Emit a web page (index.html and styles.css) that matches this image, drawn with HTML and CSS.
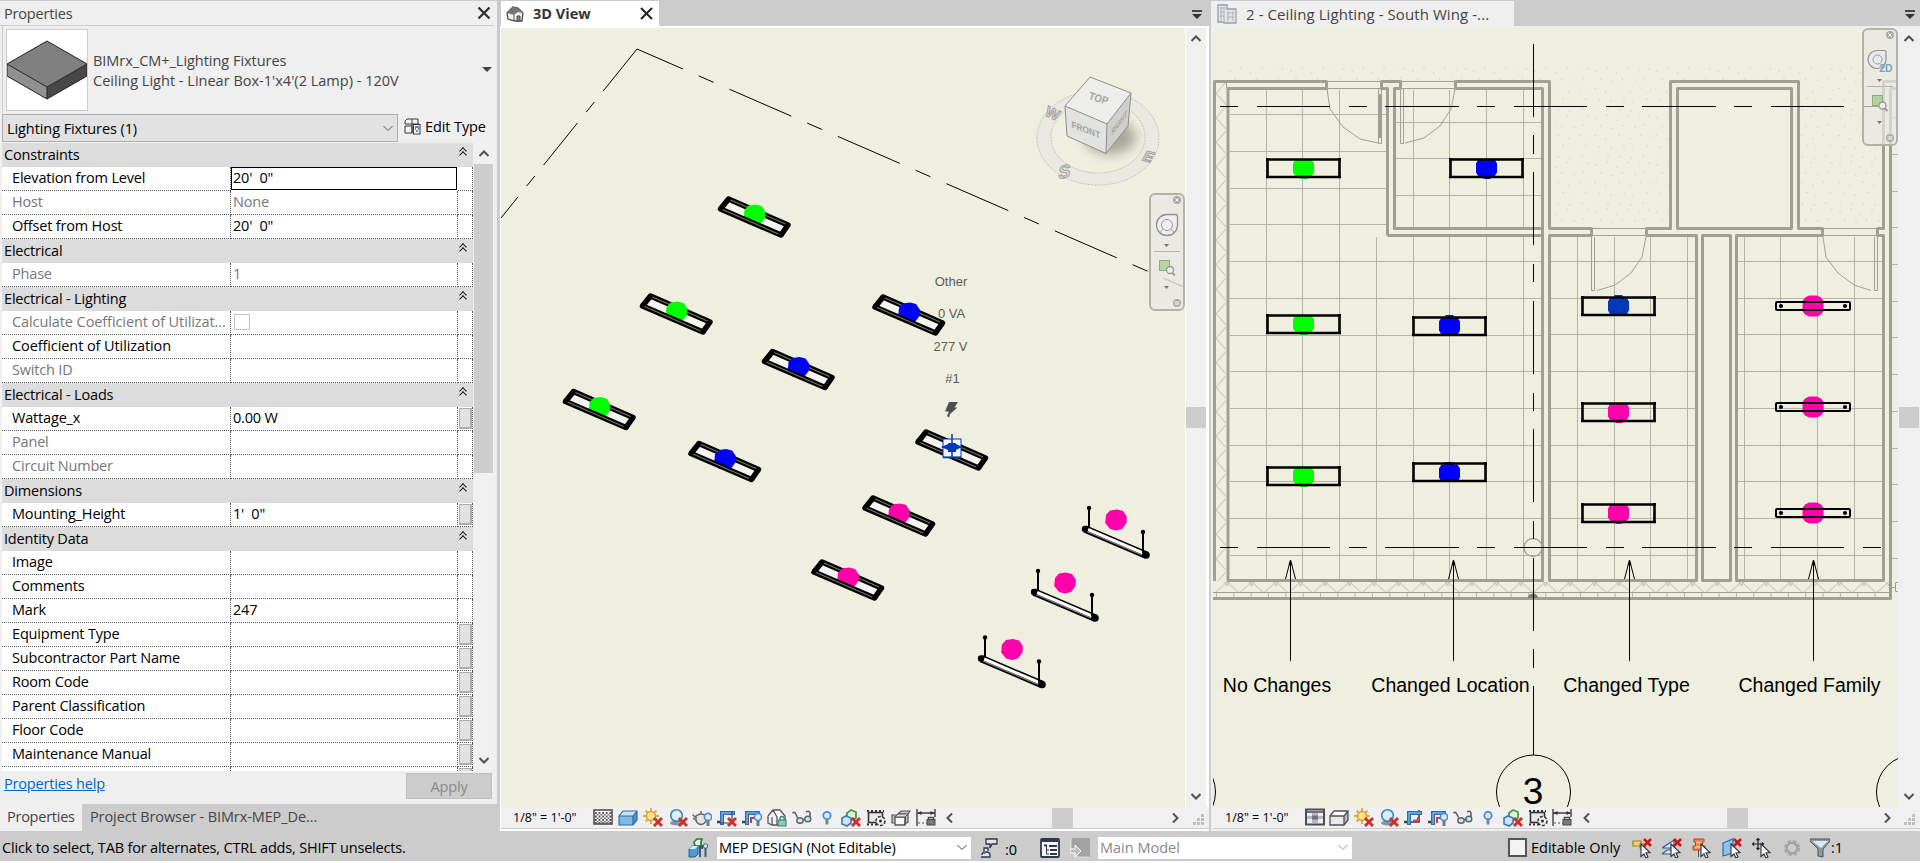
FILE: index.html
```html
<!DOCTYPE html>
<html lang="en">
<head>
<meta charset="utf-8">
<title>Lighting Fixtures</title>
<link rel="stylesheet" href="styles.css">
</head>
<body>
<svg class="defs" width="0" height="0" aria-hidden="true">
  <defs>
    <g id="redx"><path d="M11 10l8 8M19 10l-8 8" stroke="#c8322c" stroke-width="3" fill="none"/></g>
    <g id="minibulb"><circle cx="16" cy="9" r="3.6" fill="#dcecff" stroke="#4a86d8" stroke-width="1.6"/><path d="M16 13v5" stroke="#777" stroke-width="3"/></g>
    <symbol id="i-hatch" viewBox="0 0 20 20"><rect x="1" y="2" width="18" height="14" fill="#fff" stroke="#444" stroke-width="1.5"/><path d="M2 5h17M2 8.500h17M2 12h17M2 15h17" stroke="#555" stroke-width="1.800" stroke-dasharray="1.800 1.800"/><path d="M3.800 6.700h15M3.800 10.200h15M3.800 13.700h15" stroke="#777" stroke-width="1.600" stroke-dasharray="1.800 1.800"/></symbol>
    <symbol id="i-check" viewBox="0 0 20 20"><rect x="1" y="1.500" width="18" height="15" fill="#eceef0" stroke="#4a4e54" stroke-width="2"/><path d="M2 3h16v2H2z" fill="#6d737c"/><path d="M7 5h6v3H7zM2 8h5v3H2zM13 8h5v3h-5zM7 11h6v4H7z" fill="#b4b9c0"/><path d="M7 7.500h6v4H7z" fill="#6d737c"/></symbol>
    <symbol id="i-bluecube" viewBox="0 0 20 20"><path d="M1 8l4-5h14l-4 5z" fill="#c6e2f5"/><path d="M1 8h14v9H1z" fill="#7fb9e4"/><path d="M15 8l4-5v9l-4 5z" fill="#4f93cc"/><path d="M1 8l4-5h14v9l-4 5H1zM1 8h14v9M15 8l4-5" fill="none" stroke="#2c6ca8" stroke-width="1.200"/></symbol>
    <symbol id="i-graycube" viewBox="0 0 20 20"><path d="M1 8l4-5h14l-4 5z" fill="#fafafa"/><path d="M1 8h14v9H1z" fill="#e9e9e9"/><path d="M15 8l4-5v9l-4 5z" fill="#b9bcc0"/><path d="M1 8l4-5h14v9l-4 5H1zM1 8h14v9M15 8l4-5" fill="none" stroke="#4d5258" stroke-width="1.300"/></symbol>
    <symbol id="i-sun" viewBox="0 0 20 20"><path d="M8 0v3M8 13v3M0 8h3M13 8h3M2.500 2.500l2 2M13.500 2.500l-2 2M2.500 13.500l2-2" stroke="#e8a33a" stroke-width="1.800"/><circle cx="8" cy="8" r="4.500" fill="#ffe48a" stroke="#dd9a2f" stroke-width="1.400"/><use href="#redx"/></symbol>
    <symbol id="i-shadow" viewBox="0 0 20 20"><ellipse cx="9" cy="15" rx="7" ry="2.500" fill="#8d9298"/><circle cx="8.500" cy="7.500" r="5.800" fill="#d9edfb" stroke="#3f82bd" stroke-width="1.600"/><use href="#redx"/></symbol>
    <symbol id="i-teapot" viewBox="0 0 20 20"><path d="M4 8q5-4 10 0v5q-2 3.500-5 3.500T4 13zM4 10L.500 6.500M5 13L1 10M13.500 7h4M9 3v2.500" fill="#e4e4e4" stroke="#666b70" stroke-width="1.500"/><use href="#minibulb"/></symbol>
    <g id="crop"><path d="M5 17V5h13" fill="none" stroke="#2d6da6" stroke-width="4"/><path d="M0 14h3" stroke="#444" stroke-width="2.500"/><path d="M5 16V5h12" fill="none" stroke="#79b5e3" stroke-width="1.400"/></g>
    <symbol id="i-cropx" viewBox="0 0 20 20"><use href="#crop"/><path d="M15 3v12H3" fill="none" stroke="#444" stroke-width="1.200"/><use href="#redx"/></symbol>
    <symbol id="i-cropbulb" viewBox="0 0 20 20"><use href="#crop"/><path d="M9 15V10h4" fill="none" stroke="#c73c3c" stroke-width="2"/><use href="#minibulb"/></symbol>
    <symbol id="i-crop" viewBox="0 0 20 20"><path d="M0 14h15V2" fill="none" stroke="#333" stroke-width="1.500"/><use href="#crop"/><path d="M9 12.500h5V9" fill="none" stroke="#d84444" stroke-width="2"/></symbol>
    <symbol id="i-house" viewBox="0 0 20 20"><path d="M1 8l5-6h7l5 6v9h-8V9L6 2M1 8v7l4 2V9M10 17H5" fill="#f7f7f7" stroke="#555a60" stroke-width="1.300"/><rect x="11" y="12" width="8" height="6" fill="#8fc6bd" stroke="#337d72"/><path d="M13 12V9.500q2-2 4 0V12" fill="none" stroke="#337d72" stroke-width="1.300"/></symbol>
    <symbol id="i-glasses" viewBox="0 0 20 20"><path d="M.5 5q2-1.500 3 .5l2 4M11 12q1.500-1.500 2 0M18 9V5q-1-3-4-1" fill="none" stroke="#59636b" stroke-width="1.600"/><ellipse cx="8" cy="12.500" rx="3.200" ry="2.800" fill="#cfe6f0" stroke="#59636b" stroke-width="1.400"/><ellipse cx="15.800" cy="11" rx="3" ry="2.800" fill="#cfe6f0" stroke="#59636b" stroke-width="1.400"/></symbol>
    <symbol id="i-bulb" viewBox="0 0 20 20"><circle cx="10" cy="7.500" r="3.700" fill="#d6e8ff" stroke="#4a86d8" stroke-width="1.700"/><path d="M10 11.500v5" stroke="#7d868e" stroke-width="3"/></symbol>
    <symbol id="i-boxes" viewBox="0 0 20 20"><path d="M6 5l4-3 5 2v6l-5 2-4-2z" fill="#e2f2df" stroke="#4a9a4a" stroke-width="1.800"/><path d="M1 10l4-2 5 2v5l-4 3-5-2z" fill="#cfe5f6" stroke="#3c7cb4" stroke-width="1.600"/><use href="#redx"/></symbol>
    <symbol id="i-chip" viewBox="0 0 20 20"><rect x="2.500" y="4.500" width="14" height="10" fill="#e8e8ee" stroke="#333" stroke-width="1.600"/><path d="M1 3h17M1 16.500h10" stroke="#333" stroke-width="2" stroke-dasharray="2 2"/><circle cx="14.500" cy="13" r="4.500" fill="#eee" stroke="#333" stroke-width="1.500" stroke-dasharray="3 1.500"/><circle cx="14.500" cy="13" r="1.500" fill="#333"/></symbol>
    <symbol id="i-displace" viewBox="0 0 20 20"><path d="M1 7h5v8H1zM7 6l3-3h9l-2 3v8l-3 2V6z" fill="#bfc2c5" stroke="#555" stroke-width="1.200"/><path d="M4 9h10v8H4z" fill="#f5f5f5" stroke="#555" stroke-width="1.300"/><path d="M4 9l3-3h10l-3 3zM14 9v8" fill="#ddd" stroke="#555"/></symbol>
    <symbol id="i-dim" viewBox="0 0 20 20"><path d="M1 1v17M19 1v8M1 5h18" fill="none" stroke="#3b3f44" stroke-width="1.400"/><path d="M1.500 5l4-2v4zM18.500 5l-4-2v4z" fill="#333"/><path d="M2 15h9" stroke="#555" stroke-dasharray="2 2"/><rect x="11" y="11.500" width="8" height="5.500" fill="#77797c" stroke="#4a4a4a"/><path d="M12.500 11V9.500h5V11" fill="none" stroke="#4a4a4a" stroke-width="1.500"/></symbol>
    <symbol id="i-cursor" viewBox="0 0 20 20"><path d="M9 6l9 8.500-4 .5 2 4-2.200 1-1.800-4-3 2.500z" fill="#fff" stroke="#27313d" stroke-width="1.100"/></symbol>
    <g id="smallx"><path d="M12 1l7 7M19 1l-7 7" stroke="#c3171c" stroke-width="2.600" fill="none"/></g>
    <pattern id="dots" width="61" height="47" patternUnits="userSpaceOnUse" x="1226" y="66">
      <path d="M3 4l2 2M14 2h2M24 6l1 2M35 3l2-1M47 5h1M56 2l1 2M8 13h2M19 15l2 1M30 12l1 2M42 14h2M53 11l-1 2M2 23l2-1M13 25l1 2M26 22h2M37 25l2 1M48 21l1 2M58 24h1M7 33l1 2M18 35h2M31 32l2 1M41 36l-1 1M54 33h2M4 42h1M15 44l2-1M27 43l1 2M38 45h2M50 42l2 2" stroke="#d8d7c9" fill="none"/>
    </pattern>
    <pattern id="zig" width="24.500" height="10" patternUnits="userSpaceOnUse" x="1214.800" y="582">
      <path d="M1 10L12.250 0L23.500 10M9.500 0l4 4M15 0l-4 4" stroke="#c4c4b4" fill="none"/>
    </pattern>
    <pattern id="zigv" width="10" height="24.500" patternUnits="userSpaceOnUse" x="1216" y="81">
      <path d="M10 1L0 12.250L10 23.500" stroke="#c4c4b4" fill="none"/>
    </pattern>
    <pattern id="ticks" width="17.330" height="5" patternUnits="userSpaceOnUse" x="1216" y="592">
      <path d="M.5 0v5" stroke="#b4b4a6"/>
    </pattern>
    <g id="fixBack">
      <path d="M-34-8L-26-18L33.500 8L26.500 18z" fill="#f5f5ef"/>
      <path d="M-34-8L-26-18L33.500 8L26.500 18" fill="none" stroke="#000" stroke-width="5.500" stroke-linejoin="round"/>
      <path d="M-24-17L31 7" stroke="#77776f" stroke-width="1.100"/>
    </g>
    <g id="fixFront">
      <path d="M-34-8L26.500 18" stroke="#000" stroke-width="5.500" stroke-linecap="round"/>
      <path d="M-32-7.500L24 17" stroke="#77776f" stroke-width="1.100"/>
    </g>
    <path id="blob" d="M-10-5L-6-9.500L1-10.500L7-9L10.800-3.500L10.500 3L6 9L0 10.500L-6 9L-10.800 3z"/>
    <g id="pendant">
      <path d="M-31 9L30 35" stroke="#000" stroke-width="7.500"/>
      <path d="M-28 9.500L27 33" stroke="#fff" stroke-width="3"/>
      <path d="M-29 11.500L26 35" stroke="#8d8d85" stroke-width="1.200"/>
      <circle cx="-31" cy="9" r="3.200"/><circle cx="30" cy="35" r="3.800"/>
      <path d="M-27-12V8M27 12V33" stroke="#000" stroke-width="2"/>
      <circle cx="-27" cy="-12" r="2.200"/><circle cx="27" cy="12" r="2.200"/>
      <use href="#blob" fill="#ff00aa"/>
    </g>
    <g id="box">
      <path d="M1.500 0v20M73.500 0v20" stroke="#000" stroke-width="2.600" fill="none"/>
      <path d="M0 1.500h75M0 19h75" stroke="#000" stroke-width="2.400" fill="none"/>
    </g>
    <path id="dot" d="M-10.500-5L-8.500-8.500H8.500L10.500-5V4L8 8H4V10.500H-3V8H-8L-10.500 4z"/>
    <path id="dotup" d="M-10.500 5L-8.500 8.500H8.500L10.500 5V-4L8-8H4V-10.500H-4V-8H-8L-10.500-4z"/>
    <g id="bar">
      <path d="M-4-10.500H4L8-8.500L10.500-5V5L8 8.500L4 10.500H-4L-8 8.500L-10.500 5V-5L-8-8.500z" fill="#ff00aa"/>
      <rect x="-37" y="-4" width="74" height="8" rx="1" fill="none" stroke="#000" stroke-width="2"/>
      <circle cx="-32" r="2.100"/><circle cx="32" r="2.100"/>
    </g>
    <g id="arrow"><path d="M0 0V101" stroke="#000"/><path d="M0 0L-5 19M0 0L5 19" stroke="#000" fill="none"/><path d="M-2 5L0 0L2 5z"/></g>
    <g id="navicons">
      <circle cx="28" cy="7" r="4" fill="#aaaaa2"/><path d="M26.300 5.300l3.400 3.400M29.700 5.300l-3.400 3.400" stroke="#fff"/>
      <circle cx="28" cy="110" r="4" fill="#aaaaa2"/><path d="M25.500 109h5M25.500 111h5" stroke="#fff"/>
    </g>
  </defs>
</svg>

<div class="app">
  <main class="work">
    <aside class="props">
      <header class="props-title"><span>Properties</span>
        <svg width="14" height="14" viewBox="0 0 14 14"><path d="M1.500 1.500l11 11M12.500 1.500l-11 11" stroke="#333" stroke-width="2.400"/></svg>
      </header>
      <section class="type">
        <div class="thumb">
          <svg width="80" height="80" viewBox="0 0 80 80"><path d="M0 34L40 11L80 34L40 57z" fill="#808080"/><path d="M0 34L40 57V69L0 46z" fill="#909090"/><path d="M80 34L40 57V69L80 46z" fill="#484848"/><path d="M0 34L40 11L80 34V46L40 69L0 46zM0 34L40 57L80 34M40 57V69" fill="none" stroke="#222"/></svg>
        </div>
        <div class="type-name"><div class="t-a">BIMrx_CM+_Lighting Fixtures</div><div class="t-b">Ceiling Light - Linear Box-1'x4'(2 Lamp) - 120V</div></div>
        <svg class="type-caret" width="10" height="6"><path d="M0 0h10l-5 5z" fill="#444"/></svg>
      </section>
      <section class="filter">
        <div class="select"><span>Lighting Fixtures (1)</span><svg width="10" height="7"><path d="M.5 1l4.500 4.500L9.500 1" fill="none" stroke="#555"/></svg></div>
        <div class="edit"><svg width="17" height="17" viewBox="0 0 17 17"><path d="M1 3l2-2h5v5H1zM8 1h6v5M1 8h7v7H1zM8 6V15M8 6h7" fill="#f4f4f4" stroke="#33373c"/><rect x="9.500" y="6.500" width="6.500" height="9.500" fill="#fff" stroke="#33373c"/><path d="M11 9h4M11 11h1M14 11h1M12 13h2" stroke="#2365b5" stroke-width="1.600"/></svg><span>Edit Type</span></div>
      </section>
      <section class="grid">
        <div class="rows">
          <h3>Constraints<i></i></h3>
          <div class="row"><b>Elevation from Level</b><span class="focus">20'&nbsp; 0"</span><em></em></div>
          <div class="row off"><b>Host</b><span>None</span><em></em></div>
          <div class="row"><b>Offset from Host</b><span>20'&nbsp; 0"</span><em></em></div>
          <h3>Electrical<i></i></h3>
          <div class="row off"><b>Phase</b><span>1</span><em></em></div>
          <h3>Electrical - Lighting<i></i></h3>
          <div class="row off"><b class="wide">Calculate Coefficient of Utilizat...</b><span><u class="cb"></u></span><em></em></div>
          <div class="row"><b class="wide">Coefficient of Utilization</b><span></span><em></em></div>
          <div class="row off"><b>Switch ID</b><span></span><em></em></div>
          <h3>Electrical - Loads<i></i></h3>
          <div class="row"><b>Wattage_x</b><span>0.00 W</span><em class="btn"></em></div>
          <div class="row off"><b>Panel</b><span></span><em></em></div>
          <div class="row off"><b>Circuit Number</b><span></span><em></em></div>
          <h3>Dimensions<i></i></h3>
          <div class="row"><b>Mounting_Height</b><span>1'&nbsp; 0"</span><em class="btn"></em></div>
          <h3>Identity Data<i></i></h3>
          <div class="row"><b>Image</b><span></span><em></em></div>
          <div class="row"><b>Comments</b><span></span><em></em></div>
          <div class="row"><b>Mark</b><span>247</span><em></em></div>
          <div class="row"><b>Equipment Type</b><span></span><em class="btn"></em></div>
          <div class="row"><b>Subcontractor Part Name</b><span></span><em class="btn"></em></div>
          <div class="row"><b>Room Code</b><span></span><em class="btn"></em></div>
          <div class="row"><b>Parent Classification</b><span></span><em class="btn"></em></div>
          <div class="row"><b>Floor Code</b><span></span><em class="btn"></em></div>
          <div class="row"><b>Maintenance Manual</b><span></span><em class="btn"></em></div>
          <div class="row"><b></b><span></span><em class="btn"></em></div>
        </div>
        <div class="vscroll props-scroll">
          <svg width="10" height="7"><path d="M.5 6L5 1.500L9.500 6" fill="none" stroke="#505050" stroke-width="2"/></svg>
          <div class="thumbbar"></div>
          <svg class="down" width="10" height="7"><path d="M.5 1L5 5.500L9.500 1" fill="none" stroke="#505050" stroke-width="2"/></svg>
        </div>
      </section>
      <footer class="props-foot"><a>Properties help</a><div class="apply">Apply</div></footer>
      <nav class="props-tabs"><span class="on">Properties</span><span class="pb">Project Browser - BIMrx-MEP_De...</span></nav>
    </aside>

    <section class="view active">
      <header class="tabs">
        <div class="tab tab3d"><svg width="18" height="18" viewBox="0 0 18 18"><path d="M1 8l6-6 5 1 5 5-1 8H9l-7-2z" fill="#f2f2f2" stroke="#4a4a4a" stroke-width="1.300"/><path d="M1 8l6-6 5 1 5 5-5-1-4 3z" fill="#777" /><path d="M8 10v6M11 11h3v5h-3z" stroke="#4a4a4a" fill="#888"/></svg><strong>3D View</strong><svg width="13" height="13" viewBox="0 0 13 13"><path d="M1 1l11 11M12 1L1 12" stroke="#222" stroke-width="2"/></svg></div>
        <svg class="menu" width="10" height="9"><path d="M0 1h10" stroke="#444" stroke-width="2"/><path d="M0 4h10L5 9z" fill="#333"/></svg>
      </header>
      <div class="stage">
        <svg class="canvas" width="684" height="779" viewBox="501 28 684 779">
          <path d="M637 49L1185 287.500" stroke="#000" fill="none" stroke-dasharray="67.500 17.300 16.200 17.300" stroke-dashoffset="17.500"/>
          <path d="M637 49L501 218" stroke="#000" fill="none" stroke-dasharray="54 14 13 14"/>
          <g transform="translate(754.500 217)"><use href="#fixBack"/><use href="#blob" y="-2" fill="#0f0"/><use href="#fixFront"/></g>
          <g transform="translate(676.500 314)"><use href="#fixBack"/><use href="#blob" y="-2" fill="#0f0"/><use href="#fixFront"/></g>
          <g transform="translate(599.500 409.500)"><use href="#fixBack"/><use href="#blob" y="-2" fill="#0f0"/><use href="#fixFront"/></g>
          <g transform="translate(909 315)"><use href="#fixBack"/><use href="#blob" y="-2" fill="#00f"/><use href="#fixFront"/></g>
          <g transform="translate(798.500 369.500)"><use href="#fixBack"/><use href="#blob" y="-2" fill="#00f"/><use href="#fixFront"/></g>
          <g transform="translate(725 461.500)"><use href="#fixBack"/><use href="#blob" y="-2" fill="#00f"/><use href="#fixFront"/></g>
          <g transform="translate(952 450)"><use href="#fixBack"/><use href="#fixFront"/>
            <rect x="-9" y="-11" width="18" height="18" fill="#eef7ff" stroke="#0038b8"/><path d="M0-16V8M-10-3H10M-9 7.500H9.500" stroke="#0038b8" stroke-width="1.500"/><path d="M-11-3L-5-5.500L-3-7H3L5-5.500L10-3L4 0V2H-4V0z" fill="#0038b8"/></g>
          <g transform="translate(899 516)"><use href="#fixBack"/><use href="#blob" y="-2" fill="#ff00aa"/><use href="#fixFront"/></g>
          <g transform="translate(848 580)"><use href="#fixBack"/><use href="#blob" y="-2" fill="#ff00aa"/><use href="#fixFront"/></g>
          <use href="#pendant" x="1116" y="520"/>
          <use href="#pendant" x="1065" y="583"/>
          <use href="#pendant" x="1012" y="649.500"/>
          <g class="note"><text x="951" y="286">Other</text><text x="951.500" y="318">0 VA</text><text x="950.500" y="351">277 V</text><text x="952.500" y="383">#1</text></g>
          <path d="M949 402H958L954.500 407.500H957.500L950 414L949 417.500L947 416L949 411.500H945z" fill="#4c5054"/>

          <g class="compass">
            <path fill-rule="evenodd" d="M1037 138a61 47 0 1 0 122 0a61 47 0 1 0-122 0zM1051 137a47 36 0 1 0 94 0a47 36 0 1 0-94 0z" fill="#e9e9e2" stroke="#c2c2ba" stroke-dasharray="2 1"/>
            <ellipse cx="1110" cy="137" rx="26" ry="17" fill="#77776c" class="soft"/>
            <path d="M1090 77L1131 93L1107 124L1065 106z" fill="#ededeb"/>
            <path d="M1065 106L1107 124L1106 153.500L1067 136z" fill="#e2e2df"/>
            <path d="M1131 93L1107 124L1106 153.500L1128 126z" fill="#cfcfcb"/>
            <path d="M1090 77L1131 93L1128 126L1106 153.500L1067 136L1065 106zM1065 106L1107 124L1131 93M1107 124L1106 153.500" fill="none" stroke="#8e8e8a"/>
            <text transform="matrix(.85 .26 -.3 .95 1088 99)" font-size="11">TOP</text>
            <text transform="matrix(.88 .34 .02 1 1071.500 127.500)" font-size="9.500">FRONT</text>
            <text transform="matrix(.55 -.72 -.02 1 1111.500 136)" font-size="9">RIGHT</text>
            <text class="dir" transform="translate(1044 115) rotate(25)" font-size="15">W</text>
            <text class="dir" transform="translate(1058 179) rotate(-10) skewX(-15)" font-size="18">S</text>
            <text class="dir" transform="translate(1141 160) rotate(15) skewX(-15)" font-size="15">E</text>
          </g>
          <g transform="translate(1149 193)">
            <rect x="1" y="1" width="34" height="116" rx="5" fill="#e8e8e4" fill-opacity=".8" stroke="#b2b2a9" stroke-width="2"/>
            <use href="#navicons"/>
            <path d="M18 21.500h8.500q2 0 2 2V32A10.500 10.500 0 1 1 18 21.500z" fill="#eee" stroke="#8f8f8f" stroke-width="1.300"/><circle cx="18" cy="32" r="5.500" fill="none" stroke="#999"/><path d="M14 36l-3 3M22 36l3 3" stroke="#aaa"/>
            <path d="M15 51h5l-2.500 3zM15 93h5l-2.500 3z" fill="#777"/><path d="M5 58.500h26" stroke="#b5b5b0"/>
            <rect x="10.500" y="67.500" width="10" height="10" fill="#b9d3a4" stroke="#86b077"/><circle cx="21" cy="77" r="3.500" fill="#eee" stroke="#999" stroke-width="1.300"/><path d="M23 79.500l3 3" stroke="#999" stroke-width="1.800"/>
          </g>
        </svg>
        <div class="vscroll view-scroll"><svg width="10" height="7"><path d="M.5 6L5 1.500L9.500 6" fill="none" stroke="#505050" stroke-width="2"/></svg><div class="thumbbar"></div><svg class="down" width="10" height="7"><path d="M.5 1L5 5.500L9.500 1" fill="none" stroke="#505050" stroke-width="2"/></svg></div>
      </div>
      <footer class="viewbar">
        <span class="scale">1/8" = 1'-0"</span>
        <div class="tools tools-a">
          <svg><use href="#i-hatch"/></svg><svg><use href="#i-bluecube"/></svg><svg><use href="#i-sun"/></svg><svg><use href="#i-shadow"/></svg><svg><use href="#i-teapot"/></svg><svg><use href="#i-cropx"/></svg><svg><use href="#i-cropbulb"/></svg><svg><use href="#i-house"/></svg><svg><use href="#i-glasses"/></svg><svg><use href="#i-bulb"/></svg><svg><use href="#i-boxes"/></svg><svg><use href="#i-chip"/></svg><svg><use href="#i-displace"/></svg><svg><use href="#i-dim"/></svg>
        </div>
        <div class="hscroll h-a"><svg width="7" height="10"><path d="M6 .5L1.500 5L6 9.500" fill="none" stroke="#505050" stroke-width="2"/></svg><div class="hthumb"></div><svg width="7" height="10"><path d="M1 .5L5.500 5L1 9.500" fill="none" stroke="#505050" stroke-width="2"/></svg></div>
        <svg class="grip" width="12" height="12"><path d="M8 0h3v3H8zM4 4h3v3H4zM8 4h3v3H8zM0 8h3v3H0zM4 8h3v3H4zM8 8h3v3H8z" fill="#bfbfbf"/></svg>
      </footer>
    </section>

    <section class="view plan">
      <header class="tabs">
        <div class="tab tabplan"><svg width="20" height="20" viewBox="0 0 20 20"><path d="M1 1h9v4h9v14H7v-1H1z" fill="#e2e4e8" stroke="#9a9da2" stroke-width="1.300"/><path d="M3 4h7M3 8h4M3 12h4M4 3v14M7 5v14M10 9h7M10 13h7M11 7v10M16 7v10" stroke="#aeb2b8"/></svg><span>2 - Ceiling Lighting - South Wing -...</span></div>
        <svg class="menu" width="10" height="9"><path d="M0 1h10" stroke="#444" stroke-width="2"/><path d="M0 4h10L5 9z" fill="#333"/></svg>
      </header>
      <div class="stage">
        <svg class="canvas" width="685" height="779" viewBox="1213 28 685 779">
          <path d="M1226 66H1898V80H1226zM1552 80H1668V227H1552zM1801 80H1881V227H1801z" fill="url(#dots)"/>
          <rect x="1216" y="83" width="10" height="498" fill="url(#zigv)"/>
          <rect x="1216" y="582" width="673" height="10" fill="url(#zig)"/>
          <rect x="1216" y="592" width="673" height="5" fill="url(#ticks)"/>
          <g class="tile">
            <path d="M1266.500 90V580M1302.500 90V580M1339.500 90V580M1376.500 237V580M1413.500 90V227M1449.500 90V227M1486.500 90V227M1523.500 90V227M1413.500 237V580M1449.500 237V580M1486.500 237V580M1523.500 237V580"/>
            <path d="M1230 114.500H1386M1230 151.500H1386M1230 188.500H1386M1230 224.500H1386M1230 261.500H1541M1230 298.500H1541M1230 335.500H1541M1230 371.500H1541M1230 408.500H1541M1230 445.500H1541M1230 481.500H1541M1230 518.500H1541M1230 555.500H1541M1396 122.500H1541M1396 158.500H1541M1396 195.500H1541"/>
            <path d="M1551 261.500H1695M1551 298.500H1695M1551 334.500H1695M1551 371.500H1695M1551 408.500H1695M1551 445.500H1695M1551 481.500H1695M1551 518.500H1695M1551 555.500H1695M1577.500 237V580M1614.500 237V580M1650.500 237V580M1687.500 237V580"/>
            <path d="M1738 261.500H1882M1738 298.500H1882M1738 334.500H1882M1738 371.500H1882M1738 408.500H1882M1738 445.500H1882M1738 481.500H1882M1738 518.500H1882M1738 555.500H1882M1744.500 237V580M1780.500 237V580M1817.500 237V580M1854.500 237V580"/>
            <path d="M1892 117.500h6M1892 154.500h6M1892 191.500h6M1892 227.500h6M1892 264.500h6M1892 301.500h6M1892 337.500h6M1892 374.500h6M1892 411.500h6M1892 448.500h6M1892 484.500h6M1892 521.500h6M1892 558.500h6"/>
          </g>
          <g class="thin">
            <path d="M1226.500 83V88M1327 81.500H1381M1327 88.500H1381M1401 81.500H1455M1401 88.500H1455M1592 228.500H1646M1592 235.500H1646M1823 228.500H1877M1823 235.500H1877M1213 592.500H1889"/>
            <path d="M1378.500 89V143.500H1381.500V89M1327 89L1330 109L1343 127L1360 139L1378 143M1400.500 89V143.500H1403.500V89M1455 89L1451 109L1440 126L1424 138L1405 143M1591.500 237V290.500H1594.500V237M1646 237L1642 257L1631 273L1615 285L1597 290.500M1877.500 237V290.500H1874.500V237M1823 237L1826 257L1838 273L1854 285L1871 290.500"/>
            <path d="M1892 587.500H1895.500M1898 582.500H1895.500V591.500H1898"/>
          </g>
          <path d="M1378 94h4v44h-4z" fill="#a09f94"/>
          <g class="wall">
            <path d="M1214.500 581V81.500H1326.500V88.500H1228V580.500H1542.500V88.500H1455.500V81.500H1549.500V228.500H1591.500V235.500H1549.500V580.500H1696.500V235.500H1646.500V228.500H1670.500V81.500H1798.500V228.500H1822.500V235.500H1736.500V580.500H1883.500V235.500H1877.500V228.500H1883.500V81.500H1898"/>
            <path d="M1387.500 235.500V88.500H1381.500V81.500H1400.500V88.500H1394.500V228.500H1542.500M1387.500 235.500H1542.500M1677.500 88.500H1791.500V228.500H1677.500zM1702.500 235.500H1730.500V580.500H1702.500zM1898 88.500H1890.500V598.500H1213"/>
          </g>
          <circle cx="1533" cy="547.500" r="9" class="wallcircle"/>
          <path d="M1528 598a5 4.500 0 0 1 10 0z" fill="#7c7c74"/>
          <g class="axis">
            <path id="gl" d="M1220 106.500h18M1257 106.500h73M1349 106.500h18M1385 106.500h74M1477 106.500h18M1514 106.500h73M1606 106.500h18M1642 106.500h74M1734 106.500h18M1771 106.500h73M1863 106.500h18"/>
            <use href="#gl" y="441"/>
            <path d="M1533.500 44V117M1533.500 135V154M1533.500 172V245M1533.500 264V282M1533.500 301V374M1533.500 393V411M1533.500 429V502M1533.500 521V539M1533.500 558V631M1533.500 649V668M1533.500 686V755"/>
            <circle cx="1533.500" cy="792" r="37"/><circle cx="1178.500" cy="792" r="37"/><circle cx="1913.500" cy="792" r="37"/>
          </g>
          <use href="#dot" x="1303.500" y="168.500" fill="#0f0"/><use href="#dot" x="1303.500" y="324.500" fill="#0f0"/><use href="#dot" x="1303.500" y="476.500" fill="#0f0"/>
          <use href="#dot" x="1486.500" y="168.500" fill="#00f"/><use href="#dotup" x="1449.500" y="325.500" fill="#00f"/><use href="#dotup" x="1449.500" y="472.500" fill="#00f"/>
          <use href="#dotup" x="1618.500" y="305.500" fill="#0038b8"/><use href="#dot" x="1618.500" y="412.500" fill="#ff00aa"/><use href="#dot" x="1618.500" y="513.500" fill="#ff00aa"/>
          <use href="#box" x="1266" y="158"/><use href="#box" x="1266" y="314"/><use href="#box" x="1266" y="466"/>
          <use href="#box" x="1449" y="158"/><use href="#box" x="1412" y="316"/><use href="#box" x="1412" y="462"/>
          <use href="#box" x="1581" y="296"/><use href="#box" x="1581" y="402"/><use href="#box" x="1581" y="503"/>
          <use href="#bar" x="1813" y="306"/><use href="#bar" x="1813" y="407"/><use href="#bar" x="1813" y="513"/>
          <use href="#arrow" x="1290.500" y="560"/><use href="#arrow" x="1453.500" y="560"/><use href="#arrow" x="1629.500" y="560"/><use href="#arrow" x="1813.500" y="560"/>
          <g class="label"><text x="1277" y="692">No Changes</text><text x="1450.500" y="692">Changed Location</text><text x="1626.500" y="692">Changed Type</text><text x="1809.500" y="692">Changed Family</text><text class="num" x="1533" y="804">3</text></g>
          <g transform="translate(1862 28)">
            <rect x="1" y="1" width="34" height="116" rx="5" fill="#e8e8e4" fill-opacity=".7" stroke="#b2b2a9" stroke-width="2"/>
            <use href="#navicons"/>
            <path d="M15 22.500h7.500q1.500 0 1.500 1.500V31A9 9 0 1 1 15 22.500z" fill="#e6e9ee" stroke="#8f8f8f" stroke-width="1.200"/><circle cx="15.500" cy="31.500" r="4.500" fill="none" stroke="#999"/>
            <text class="two" x="24" y="43.500">2D</text>
            <path d="M15 51h5l-2.500 3zM15 93h5l-2.500 3z" fill="#777"/><path d="M5 58.500h26" stroke="#b5b5b0"/>
            <rect x="10.500" y="67.500" width="10" height="10" fill="#b4cfa0" stroke="#86b077"/><circle cx="20.500" cy="77.500" r="3.500" fill="#eee" stroke="#999" stroke-width="1.300"/><path d="M22.500 80l3 3" stroke="#999" stroke-width="1.800"/>
          </g>
        </svg>
        <div class="vscroll view-scroll"><svg width="10" height="7"><path d="M.5 6L5 1.500L9.500 6" fill="none" stroke="#505050" stroke-width="2"/></svg><div class="thumbbar"></div><svg class="down" width="10" height="7"><path d="M.5 1L5 5.500L9.500 1" fill="none" stroke="#505050" stroke-width="2"/></svg></div>
      </div>
      <footer class="viewbar">
        <span class="scale">1/8" = 1'-0"</span>
        <div class="tools tools-b">
          <svg><use href="#i-check"/></svg><svg><use href="#i-graycube"/></svg><svg><use href="#i-sun"/></svg><svg><use href="#i-shadow"/></svg><svg><use href="#i-crop"/></svg><svg><use href="#i-cropbulb"/></svg><svg><use href="#i-glasses"/></svg><svg><use href="#i-bulb"/></svg><svg><use href="#i-boxes"/></svg><svg><use href="#i-chip"/></svg><svg><use href="#i-dim"/></svg>
        </div>
        <div class="hscroll h-b"><svg width="7" height="10"><path d="M6 .5L1.500 5L6 9.500" fill="none" stroke="#505050" stroke-width="2"/></svg><div class="hthumb"></div><svg width="7" height="10"><path d="M1 .5L5.500 5L1 9.500" fill="none" stroke="#505050" stroke-width="2"/></svg></div>
        <svg class="grip" width="12" height="12"><path d="M8 0h3v3H8zM4 4h3v3H4zM8 4h3v3H8zM0 8h3v3H0zM4 8h3v3H4zM8 8h3v3H8z" fill="#bfbfbf"/></svg>
      </footer>
    </section>
  </main>

  <footer class="status">
    <div class="hint">Click to select, TAB for alternates, CTRL adds, SHIFT unselects.</div>
    <svg class="ws" width="20" height="20" viewBox="0 0 20 20"><path d="M6 4l3-3h5l-1 3v4H7z" fill="#eaf5e6" stroke="#2f7f35" stroke-width="1.700"/><path d="M1 11l3-3h6v8l-3 3H1z" fill="#4d9ad0" stroke="#1f5e94"/><path d="M1 11l3-3h6l-3 3z" fill="#d3eafa"/><path d="M12 7v12M14 7v4M17.500 6v13" stroke="#3d5677" stroke-width="2"/><circle cx="17.500" cy="8" r="2.300" fill="#dfe6ef" stroke="#3d5677"/></svg>
    <div class="combo"><span>MEP DESIGN (Not Editable)</span><svg width="10" height="7"><path d="M.5 1l4.500 4.500L9.500 1" fill="none" stroke="#444"/></svg></div>
    <svg class="req" width="18" height="20" viewBox="0 0 18 20"><path d="M6 1h11v5h-5l-2 4V6H6zM2 17q0-3 4-3t4 3v2H1M4 14v-4h4v3" fill="#e4e4e4" stroke="#2e3440" stroke-width="1.300"/><rect x="3.500" y="13" width="2" height="3" fill="#3a7fc0"/></svg>
    <span class="zero">:0</span>
    <svg class="opt" width="20" height="20" viewBox="0 0 20 20"><rect x="1" y="1" width="18" height="18" rx="1" fill="#f6f6f6" stroke="#2e3848" stroke-width="1.800"/><path d="M2 3h16" stroke="#2e3848" stroke-width="2"/><path d="M4 7.500h3M9 8h8M10 12h7M10 16h7" stroke="#2e3848" stroke-width="1.800" fill="none"/><path d="M6.500 8v8h2.500M6.500 12h2.500" stroke="#2e3848" fill="none"/></svg>
    <svg class="act" width="20" height="20" viewBox="0 0 20 20"><path d="M1 0h19v19H8z" fill="#a2a2a2"/><path d="M1 0v10l7 9h11" fill="#a2a2a2" stroke="#fff" stroke-width=".6"/><path d="M0 11h5V7l6 6-6 6v-4H0z" fill="#bdbdbd" stroke="#fff"/></svg>
    <div class="combo main"><span>Main Model</span><svg width="10" height="7"><path d="M.5 1l4.500 4.500L9.500 1" fill="none" stroke="#999"/></svg></div>
    <div class="editable"><u></u><span>Editable Only</span></div>
    <div class="picks">
      <svg viewBox="0 0 20 20"><path d="M1 3h8v5H1zM8 6h5v4H8z" fill="#f6d36b" stroke="#a87b17" stroke-width="1.200"/><use href="#smallx"/><use href="#i-cursor" width="20" height="20"/></svg>
      <svg viewBox="0 0 20 20"><path d="M0 10L12 2v8zM0 16l5-4h8v4z" fill="#d5e8f7" stroke="#2b5f93" stroke-width="1.200"/><use href="#smallx"/><use href="#i-cursor" width="20" height="20"/></svg>
      <svg viewBox="0 0 20 20"><path d="M2 1h10v3h-1.500v4H13v4H1V8h2.500V4H2z" fill="#ee8a4e" stroke="#a84a18"/><path d="M6.500 12v7" stroke="#555"/><path d="M4.500 4.500h5M3 9h8" stroke="#ffe0c8"/><use href="#i-cursor" width="20" height="20"/></svg>
      <svg viewBox="0 0 20 20"><path d="M1 5l10-4v14L1 18z" fill="#8fc2e8" stroke="#2f6da3" stroke-width="1.200"/><use href="#smallx"/><use href="#i-cursor" width="20" height="20"/></svg>
      <svg viewBox="0 0 20 20"><path d="M6 0v12M0 6h12M4.500 2L6 .5 7.500 2M4.500 10L6 11.500 7.500 10M2 4.500L.5 6 2 7.500M10 4.500L11.500 6 10 7.500" fill="none" stroke="#222" stroke-width="1.200"/><use href="#i-cursor" width="20" height="20"/></svg>
      <svg viewBox="0 0 20 20"><circle cx="10" cy="10" r="6.300" fill="none" stroke="#a8a8a8" stroke-width="3.800" stroke-dasharray="3.200 1.750"/><circle cx="10" cy="10" r="5.300" fill="none" stroke="#a0a0a0" stroke-width="2"/></svg>
      <svg viewBox="0 0 20 20"><path d="M0 1h20v2l-7 8v8l-5-1v-7L0 3z" fill="#8f99a6" stroke="#4c5664"/><path d="M2 3h16l-7 7z" fill="#e3e8ee"/></svg>
    </div>
    <span class="one">:1</span>
  </footer>
</div>
</body>
</html>
```
FILE: styles.css
```css
* { box-sizing: border-box; }
body { margin: 0; width: 1920px; height: 863px; overflow: hidden; background: #ccc; font-family: "Open Sans", "Noto Sans", sans-serif; font-size: 14.5px; letter-spacing: -0.18px; color: #000; }
.defs { position: absolute; }
svg { display: block; flex: none; }
.app { display: flex; flex-direction: column; height: 863px; }
.work { display: flex; height: 831px; }

/* properties palette */
.props { width: 500px; display: flex; flex-direction: column; background: #efefef; border-top: 1px solid #ccc; border-right: 3px solid #ccc; white-space: nowrap; }
.props-title { height: 25px; display: flex; align-items: center; justify-content: space-between; padding: 0 3px 0 4px; border-bottom: 1px solid #ccc; color: #444; margin: 0 3px 0 0; }
.type { height: 87px; display: flex; align-items: center; margin-left: 2px; border-left: 1px solid #ccc; padding: 0 5px 0 3px; color: #444; }
.thumb { width: 82px; height: 82px; border: 1px solid #ccc; background: #fff; flex: none; }
.type-name { margin-left: 5px; flex: 1; line-height: 20px; padding-top: 2px; }
.t-a { letter-spacing: -.03px; }
.t-b { letter-spacing: .01px; }
.filter { height: 30px; display: flex; align-items: center; padding: 0 0 1px 2px; }
.select { width: 396px; height: 28px; background: #e2e2e2; border: 1px solid #adadad; display: flex; align-items: center; justify-content: space-between; padding: 2px 4px 0 4px; letter-spacing: -.08px; }
.edit { display: flex; align-items: center; gap: 4px; margin: -2px 0 0 6px; letter-spacing: -.1px; }
.grid { height: 628px; display: flex; padding-left: 2px; overflow: hidden; }
.rows { width: 471px; background: #fff; overflow: hidden; height: 628px; }
.rows h3 { margin: 0; height: 24px; line-height: 23px; font-size: 14.5px; font-weight: 400; background: #dcdcdc; padding: 0 6px 0 2px; display: flex; justify-content: space-between; }
.rows h3 i { width: 8px; height: 9px; margin-top: 4px; position: relative; }
.rows h3 i::before, .rows h3 i::after { content: ""; position: absolute; left: 1px; width: 5px; height: 5px; border: solid #000; border-width: 1.500px 0 0 1.500px; transform: rotate(45deg) scale(.9); top: 1px; }
.rows h3 i::after { top: 5px; }
.row { height: 24px; display: flex; line-height: 21px; }
.row b { font-weight: 400; width: 229px; padding-left: 10px; border-right: 1px dotted #555; border-bottom: 1px dotted #555; overflow: hidden; }
.row .wide { letter-spacing: -.09px; }
.row span { width: 227px; padding-left: 2px; border-right: 1px dotted #555; border-bottom: 1px dotted #555; }
.row em { width: 15px; border-right: 1px dotted #555; border-bottom: 1px dotted #555; }
.row.off { color: #777; }
.row .focus { border: 1px solid #000; height: 23px; padding-left: 1px; line-height: 20px; width: 226px; margin-right: 1px; }
.row .cb { display: block; width: 16px; height: 16px; border: 1px solid #c4c4c4; margin: 3px 0 0 1px; }
.row .btn { position: relative; }
.row .btn::before { content: ""; position: absolute; inset: 1px 0 1px 1px; background: #e1e1e1; border: 1px solid #adadad; border-right-width: 2px; border-bottom-width: 2px; }
.vscroll { display: flex; flex-direction: column; align-items: center; background: #f0f0f0; }
.vscroll .down { margin-top: auto; }
.props-scroll { width: 19px; margin-left: 1px; padding: 7px 0 7px; }
.props-scroll .thumbbar { width: 19px; height: 309px; margin-top: 7px; background: #cdcdcd; }
.props-foot { height: 33px; display: flex; justify-content: space-between; padding: 2px 5px 5px 4px; }
.props-foot a { color: #06c; text-decoration: underline; line-height: 21px; }
.apply { width: 86px; height: 26px; border: 1px solid #bfbfbf; background: #ccc; color: #888; text-align: center; line-height: 26px; }
.props-tabs { height: 27px; display: flex; background: #ccc; color: #444; line-height: 25px; }
.props-tabs .on { background: #efefef; width: 82px; padding-left: 7px; letter-spacing: -.25px; }
.props-tabs .pb { padding-left: 8px; letter-spacing: -.1px; }

/* drawing views */
.view { display: flex; flex-direction: column; background: #fff; padding-bottom: 2px; }
.view.active { width: 709px; padding-left: 1px; }
.view.plan { width: 711px; border-left: 2px solid #ccc; background: #efefef; }
.tabs { height: 26px; background: #ccc; display: flex; justify-content: space-between; align-items: center; }
.active .tabs { margin-left: -1px; padding: 1px 7px 0 1px; }
.plan .tabs { padding: 1px 5px 0 0; }
.tab { height: 25px; display: flex; align-items: center; }
.tab3d { width: 158px; background: #fff; padding: 0 6px 0 5px; }
.tab3d strong { margin: 0 auto 0 9px; font-size: 14.5px; color: #333; letter-spacing: 0; }
.tabplan { width: 303px; background: #efefef; padding-left: 6px; gap: 9px; color: #444; white-space: nowrap; font-size: 15px; letter-spacing: .08px; }
.menu { margin-top: 2px; }
.stage { display: flex; height: 779px; margin-top: 2px; }
.canvas { background: #efefe0; }
.plan .stage, .plan .viewbar { margin-left: 2px; }
.view-scroll { width: 20px; margin-left: 1px; padding: 7px 0 7px; }
.view-scroll .thumbbar { width: 20px; height: 21px; margin-top: 365px; background: #cdcdcd; }
.viewbar { height: 22px; display: flex; align-items: center; background: #f0f0f0; border-bottom: 1px solid #ccc; }
.scale { font-size: 12.500px; letter-spacing: 0; width: 80px; padding-left: 12px; white-space: nowrap; }
.tools { display: flex; padding-top: 1px; }
.tools svg { width: 20px; height: 20px; }
.tools-a { width: 353px; margin-left: 12px; gap: 4.850px; }
.tools-b { width: 273px; margin-left: 11.500px; gap: 4.800px; }
.hscroll { display: flex; align-items: center; }
.h-a { width: 233px; }
.h-a .hthumb { margin: 0 99px 0 99px; }
.h-b { width: 307px; margin-left: 5px; }
.h-b .hthumb { margin: 0 136px 0 137px; }
.hthumb { width: 21px; height: 20px; background: #cdcdcd; flex: none; }
.grip { margin: 4px 0 0 14px; }

.note text { font: 13px "Liberation Sans", Arial, sans-serif; letter-spacing: 0; fill: #5c5c58; text-anchor: middle; }
.compass text { font-family: "Liberation Sans", Arial, sans-serif; font-weight: 700; fill: #a3a3a0; letter-spacing: 0; }
.compass .dir { fill: #e3e3dd; stroke: #a0a09a; stroke-width: 1; }
.soft { filter: blur(6px); opacity: .6; }
.tile path { stroke: #b4b4a6; fill: none; }
.thin path { stroke: #a09f94; fill: none; }
.wall path { stroke: #a09f94; stroke-width: 3; fill: none; stroke-linejoin: round; }
.wallcircle { stroke: #a09f94; fill: none; stroke-width: 1.300px; }
.axis path, .axis circle { stroke: #000; fill: none; }
.label text { font: 19.500px "Liberation Sans", Arial, sans-serif; letter-spacing: 0; text-anchor: middle; }
.label .num { font-size: 37px; }
.two { font: 700 10.500px "Liberation Sans", Arial, sans-serif; fill: #7d9fc0; text-anchor: middle; letter-spacing: 0; }

/* status bar */
.status { height: 32px; display: flex; align-items: center; background: #ccc; padding: 3px 0 0 2px; border-bottom: 2px solid #fff; white-space: nowrap; }
.hint { width: 686px; }
.combo { width: 254px; height: 22px; margin-left: 9px; background: #fff; display: flex; align-items: center; justify-content: space-between; padding: 0 4px 0 2px; }
.req { margin-left: 9px; }
.zero { width: 41px; padding: 3px 0 0 7px; }
.opt { margin-left: 1px; }
.act { margin-left: 10px; }
.combo.main { margin-left: 8px; color: #8a8a8a; letter-spacing: 0; }
.editable { display: flex; align-items: center; gap: 4px; margin-left: 156px; width: 124px; letter-spacing: 0; }
.editable u { width: 19px; height: 19px; border: 2px solid #555; background: #f3f3f3; flex: none; }
.picks { display: flex; gap: 10px; width: 197px; }
.picks svg { width: 20px; height: 20px; }
.picks svg:last-child { margin-left: -2px; }
.one { margin-left: 2px; }
```
